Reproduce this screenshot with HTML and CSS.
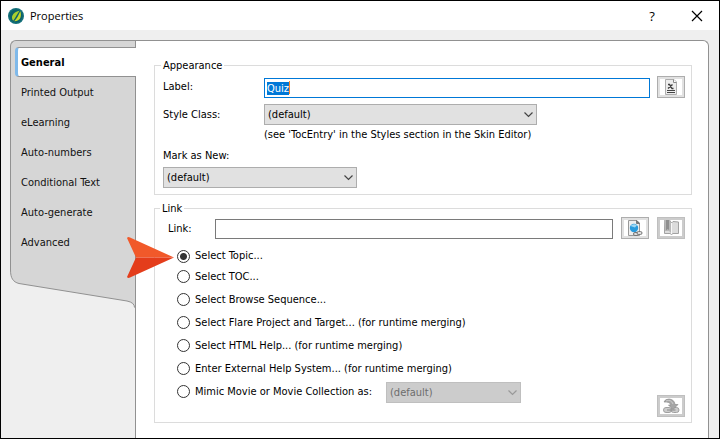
FILE: index.html
```html
<!DOCTYPE html>
<html lang="en">
<head>
<meta charset="utf-8">
<title>Properties</title>
<link rel="stylesheet" href="styles.css">
</head>
<body>
<div class="window">
  <header class="titlebar">
    <svg class="app-icon" viewBox="0 0 16 16" aria-hidden="true">
      <circle cx="8" cy="8" r="8" fill="#14707a"/>
      <circle cx="8" cy="8" r="6.500" fill="#0c5f6b"/>
      <path d="M5.200 12.800C2.600 9.500 4 4.500 11.500 2.800C9.500 5.500 8 9 5.200 12.800z" fill="#a9cf2f"/>
      <path d="M6.200 13.300C9 10.500 10.500 7 12.300 3.200C14 7.500 12.500 13.500 6.200 13.300z" fill="#c6d92c"/>
    </svg>
    <h1 class="title">Properties</h1>
    <button class="caption" type="button" aria-label="Help">?</button>
    <button class="caption" type="button" aria-label="Close">
      <svg class="close-icon" viewBox="0 0 12 12"><path d="M1 1L11 11M11 1L1 11" fill="none" stroke="#000" stroke-width="1.200"/></svg>
    </button>
  </header>

  <div class="body">
    <nav class="sidebar">
      <div class="tabs">
        <a class="tab active" href="#general">General</a>
        <a class="tab" href="#printed">Printed Output</a>
        <a class="tab" href="#elearning">eLearning</a>
        <a class="tab" href="#numbers">Auto-numbers</a>
        <a class="tab" href="#conditional">Conditional Text</a>
        <a class="tab" href="#generate">Auto-generate</a>
        <a class="tab" href="#advanced">Advanced</a>
      </div>
      <svg class="tail" viewBox="0 0 125 48" aria-hidden="true">
        <path d="M.5 0V10C.5 18 3 22 9 23.500L117 41Q124.500 42.500 124.500 47.500H125V0z" fill="#d6d6d6"/>
        <path d="M.5 0V10C.5 18 3 22 9 23.500L117 41Q124.500 42.500 124.500 47.500" fill="none" stroke="#919191"/>
      </svg>
    </nav>

    <main class="panel">
      <fieldset class="group">
        <legend>Appearance</legend>
        <div class="label-row">
          <label for="label">Label:</label>
          <span class="text-wrap"><input class="text" id="label" type="text" value="Quiz"><i class="caret"></i></span>
          <button class="tool" type="button" aria-label="Insert variable">
            <svg class="glyph" viewBox="0 0 22 16">
              <path d="M5.500.5H14L16.500 3V15.500H5.500z" fill="#ececec" stroke="#adadad"/>
              <path d="M13.500.5V3.500H16.500" fill="#fff" stroke="#888"/>
              <path d="M8 5.500H9.500L12 9.500H13.500M12.500 5.500L8 9.500" fill="none" stroke="#3c3c3c" stroke-width="1.400"/>
              <path d="M7 11.500H15M7 13.500H15" stroke="#444"/>
            </svg>
          </button>
        </div>
        <div class="style-row">
          <label for="style">Style Class:</label>
          <span class="drop">
            <select id="style"><option>(default)</option></select>
            <svg class="chevron" viewBox="0 0 9 6"><path d="M.5.5L4.500 4.500L8.500.5" /></svg>
          </span>
          <p class="note">(see 'TocEntry' in the Styles section in the Skin Editor)</p>
        </div>
        <label class="mark-label" for="mark">Mark as New:</label>
        <span class="drop mark">
          <select id="mark"><option>(default)</option></select>
          <svg class="chevron" viewBox="0 0 9 6"><path d="M.5.5L4.500 4.500L8.500.5" /></svg>
        </span>
      </fieldset>

      <fieldset class="group link">
        <legend>Link</legend>
        <div class="link-row">
          <label for="link">Link:</label>
          <input class="text plain" id="link" type="text">
          <button class="tool" type="button" aria-label="Select link">
            <svg class="glyph" viewBox="0 0 22 16">
              <path d="M4.500.5H13L15.500 3V15.500H4.500z" fill="#eee" stroke="#999"/>
              <path d="M12.500.5V3.500H15.500z" fill="#777" stroke="#777"/>
              <circle cx="10" cy="8" r="4.200" fill="#2a9bdc"/>
              <path d="M6.500 6Q9 3 13 5L11 7.500z" fill="#9fd8f3"/>
              <rect x="9.500" y="12.500" width="5" height="3" rx="1.500" fill="#ddd" stroke="#777"/>
              <rect x="13" y="11.500" width="5" height="3" rx="1.500" fill="#ddd" stroke="#777"/>
            </svg>
          </button>
          <button class="tool" type="button" aria-label="Open book" disabled>
            <svg class="glyph" viewBox="0 0 22 16">
              <path d="M4.500 0V13.500H10L11.500 14.500L13 13.500H18.500V2L13 1.500L11.500 3L9.500 0z" fill="#dcdcdc" stroke="#a2a2a2"/>
              <path d="M4 0H9.500L11 2.500V13L9 11H5z" fill="#b8b8b8"/>
              <path d="M6 0H9V10L7.500 9L6 10.500z" fill="#8f8f8f"/>
              <path d="M11.500 3V14" stroke="#f8f8f8"/>
            </svg>
          </button>
        </div>
        <div class="choices-row">
          <div class="choices">
            <label class="choice"><input type="radio" name="target" checked>Select Topic...</label>
            <label class="choice"><input type="radio" name="target">Select TOC...</label>
            <label class="choice"><input type="radio" name="target">Select Browse Sequence...</label>
            <label class="choice"><input type="radio" name="target">Select Flare Project and Target... (for runtime merging)</label>
            <label class="choice"><input type="radio" name="target">Select HTML Help... (for runtime merging)</label>
            <label class="choice"><input type="radio" name="target">Enter External Help System... (for runtime merging)</label>
            <div class="mimic">
              <label class="choice"><input type="radio" name="target">Mimic Movie or Movie Collection as:</label>
              <span class="drop">
                <select aria-label="Movie type" disabled><option>(default)</option></select>
                <svg class="chevron" viewBox="0 0 9 6"><path d="M.5.5L4.500 4.500L8.500.5" /></svg>
              </span>
            </div>
            <svg class="pointer" viewBox="0 0 47 41" aria-hidden="true">
              <path d="M0 1Q1-.5 3 .5L47 20.500H9z" fill="#f1592a"/>
              <path d="M0 40Q1 41.500 3 40.500L47 20.500H9z" fill="#e43d1b"/>
            </svg>
          </div>
          <button class="tool" type="button" aria-label="Remove link" disabled>
            <svg class="glyph" viewBox="0 0 22 16">
              <rect x="3.500" y="9.500" width="8" height="5" rx="2.500" fill="#ccc" stroke="#a0a0a0"/>
              <rect x="11" y="9.500" width="8" height="5" rx="2.500" fill="#ccc" stroke="#a0a0a0"/>
              <path d="M7 12H15.500" stroke="#8a8a8a"/>
              <path d="M4 4Q5 1 9 1Q14.500 1.500 15 6.500H18L13 11.500L8.500 7H11Q10 3.500 4 4z" fill="#a6a6a6" stroke="#8d8d8d" stroke-width=".7"/>
              <path d="M6 3Q11 1 13 6" fill="none" stroke="#ccc"/>
            </svg>
          </button>
        </div>
      </fieldset>
    </main>
  </div>
</div>
<script src="script.js"></script>
</body>
</html>
```
FILE: styles.css
```css
* { box-sizing: border-box; }

body {
  margin: 0;
  background: #efefef;
  color: #000;
  font: 11px/16px "DejaVu Sans Condensed", "DejaVu Sans", sans-serif;
}

input, select, button { font: inherit; color: inherit; margin: 0; }

.window {
  display: flex;
  flex-direction: column;
  min-height: 100vh;
  border: 1px solid #000;
}

/* Title bar */
.titlebar {
  display: flex;
  align-items: center;
  height: 29px;
  padding: 0 7px;
  background: #fff;
}
.app-icon { width: 16px; height: 16px; }
.title {
  flex: 1;
  margin: 0 0 0 6px;
  font: 11px/16px "Open Sans", sans-serif;
}
.caption {
  display: flex;
  align-items: center;
  justify-content: center;
  width: 30px;
  height: 28px;
  margin-left: 15px;
  padding: 0;
  border: 0;
  background: none;
  font: 13px/16px "Open Sans", sans-serif;
}
.close-icon { width: 12px; height: 12px; }

/* Tabs */
.body {
  display: flex;
  flex: 1;
  padding: 10px 10px 0 9px;
}
.sidebar { flex: 0 0 125px; }
.tabs {
  height: 220px;
  padding: 6px 0 0 4px;
  border: 1px solid #919191;
  border-width: 1px 0 0 1px;
  border-radius: 6px 0 0 0;
  background: #d6d6d6;
}
.tab {
  display: block;
  height: 30px;
  padding-left: 6px;
  color: #111;
  line-height: 32px;
  text-decoration: none;
}
.tab.active {
  position: relative;
  margin-right: -1px;
  padding-left: 3px;
  border: solid #919191;
  border-width: 1px 0;
  border-left: 3px solid #7fb9ea;
  border-radius: 4px 0 0 4px;
  background: #fff;
  color: #000;
  font-weight: 700;
  line-height: 30px;
}
.tail { display: block; width: 100%; }

/* Panel */
.panel {
  flex: 1;
  min-width: 0;
  padding: 17px 16px 15px 18px;
  border: solid #919191;
  border-width: 1px 1px 0;
  border-radius: 0 6px 0 0;
  background: #fff;
}
.group {
  min-width: 0;
  margin: 0;
  padding: 3px 6px 6px 8px;
  border: 1px solid #dcdcdc;
}
.group legend {
  margin-left: -2px;
  padding: 0 2px;
  line-height: 15px;
}
.label-row, .style-row {
  display: grid;
  grid-template-columns: 101px 1fr 28px;
  align-items: center;
}
.text-wrap {
  position: relative;
  align-self: end;
  margin-right: 7px;
}
.text {
  display: block;
  width: 100%;
  height: 20px;
  padding: 0 2px;
  border: 1px solid #0078d7;
  border-radius: 0;
  outline: 0;
  background: #fff;
}
.text::selection { background: #0078d7; color: #fff; }
.caret {
  position: absolute;
  top: 3px;
  left: 25px;
  width: 1px;
  height: 13px;
  background: #ff8728;
}
.tool {
  flex: none;
  display: flex;
  width: 28px;
  height: 22px;
  padding: 2px;
  border: 1px solid #adadad;
  background: #e1e1e1;
}
.tool:disabled { border-color: #bfbfbf; background: #ccc; }
.glyph { width: 22px; height: 16px; background: #fff; }

.style-row { grid-template-columns: 101px 1fr; margin-top: 6px; }
.note { grid-column: 2; margin: 0; line-height: 20px; }
.drop {
  position: relative;
  display: block;
  width: 273px;
  max-width: 100%;
}
.drop select {
  display: block;
  width: 100%;
  height: 21px;
  padding: 0 3px;
  border: 1px solid #adadad;
  border-radius: 0;
  background: #e1e1e1;
  appearance: none;
}
.drop select:disabled {
  border-color: #bfbfbf;
  background: #ccc;
  color: #6d6d6d;
  opacity: 1;
}
.chevron {
  position: absolute;
  top: 8px;
  right: 4px;
  width: 9px;
  height: 6px;
  fill: none;
  stroke: #444;
  stroke-width: 1.200;
  pointer-events: none;
}
select:disabled + .chevron { stroke: #999; }
.mark-label { display: block; padding: 2px 0; line-height: 18px; }
.drop.mark { width: 194px; }

/* Link group */
.link { margin-top: 6px; padding: 1px 6px 5px 13px; }
.link legend { margin-left: -8px; }
.link-row { display: flex; align-items: flex-end; }
.link-row label { flex: 0 0 47px; line-height: 20px; }
.plain { flex: 1; min-width: 0; border-color: #7a7a7a; }
.link-row .tool { margin-left: 8px; }
.choices-row { display: flex; align-items: flex-end; }
.choices { position: relative; flex: 1; padding: 8px 0 14px 9px; }
.choice {
  display: flex;
  align-items: center;
  gap: 5px;
  height: 23px;
}
.choices > .choice:first-child { height: 18px; }
.choice input {
  flex: none;
  width: 13px;
  height: 13px;
  border: 1px solid #333;
  border-radius: 50%;
  background: #fff;
  appearance: none;
}
.choice input:checked {
  background: radial-gradient(circle, #333 3px, #fff 4px);
}
.mimic { display: flex; align-items: flex-end; }
.mimic .choice { flex: 0 0 209px; white-space: nowrap; }
.mimic .drop { width: 135px; }
.pointer {
  position: absolute;
  top: -2px;
  left: -41px;
  width: 47px;
  height: 41px;
}
```
FILE: script.js
```js
// The label is ready to be typed over when the dialog opens.
document.getElementById('label').select();
```
